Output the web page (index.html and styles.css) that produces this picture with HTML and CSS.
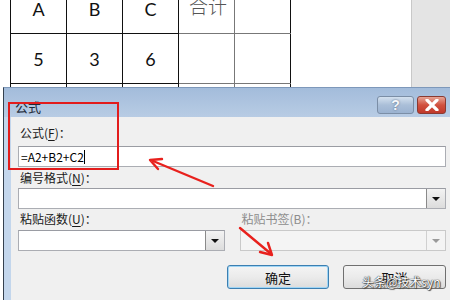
FILE: index.html
```html
<!DOCTYPE html>
<html lang="zh-CN">
<head>
    <meta charset="UTF-8">
    <title>公式</title>
    <link rel="stylesheet" href="styles.css">
</head>
<body>
    <div class="page">
        <div class="sheet">
            <div class="doc">
                <table class="grid">
                    <tr>
                        <td>A</td><td>B</td><td>C</td><td class="han">合计</td><td></td>
                    </tr>
                    <tr>
                        <td>5</td><td>3</td><td>6</td><td></td><td></td>
                    </tr>
                    <tr>
                        <td></td><td></td><td></td><td></td><td></td>
                    </tr>
                </table>
            </div>
            <div class="side"></div>
        </div>

        <div class="dialog">
            <div class="titlebar">
                <span class="title">公式</span>
                <div class="caption-btns">
                    <div class="cap help">?</div>
                    <div class="cap close">
                        <svg width="16" height="12" viewBox="0 0 16 12">
                            <path d="M3 1 L13 11 M13 1 L3 11" stroke="#fff" stroke-width="3.2" stroke-linecap="round"/>
                        </svg>
                    </div>
                </div>
            </div>
            <div class="body">
                <div class="lbl first">公式(<u>F</u>)：</div>
                <div class="field text">=A2+B2+C2<span class="caret"></span></div>

                <div class="lbl second">编号格式(<u>N</u>)：</div>
                <div class="field combo">
                    <span class="drop"><i class="tri"></i></span>
                </div>

                <div class="pair">
                    <div class="col">
                        <div class="lbl">粘贴函数(<u>U</u>)：</div>
                        <div class="field combo">
                            <span class="drop"><i class="tri"></i></span>
                        </div>
                    </div>
                    <div class="col off">
                        <div class="lbl">粘贴书签(B)：</div>
                        <div class="field combo">
                            <span class="drop"><i class="tri"></i></span>
                        </div>
                    </div>
                </div>

                <div class="actions">
                    <button class="btn ok">确定</button>
                    <button class="btn">取消</button>
                </div>
            </div>
        </div>

        <div class="highlight"></div>
        <svg class="arrows" width="450" height="300" viewBox="0 0 450 300">
            <g stroke="#e8211d" stroke-width="2.4" fill="none" stroke-linecap="round">
                <path d="M213 186 L153 161"/>
                <path d="M150 160 L162 159 M150 160 L158 169"/>
                <path d="M240 228 L270 253"/>
                <path d="M272 255 L260 252 M272 255 L268 243"/>
            </g>
        </svg>
        <div class="watermark">头条@技术syn</div>
    </div>
</body>
</html>
```

FILE: styles.css
```css
* {
    box-sizing: border-box;
}

body {
    margin: 0;
    background: #fff;
    font-family: "Noto Sans CJK SC", "Noto Sans", sans-serif;
}

.page {
    position: relative;
    width: 450px;
    height: 300px;
    overflow: hidden;
}

/* document behind the dialog */
.sheet {
    display: flex;
    height: 87px;
    overflow: hidden;
}

.doc {
    width: 412px;
    padding-left: 10px;
    border-right: 1px solid #c8c8c8;
}

.side {
    flex: 1;
    background: #e4e4e4;
}

.grid {
    border-collapse: collapse;
    margin-top: -17px;
}

.grid td {
    width: 56px;
    height: 50px;
    border: 1px solid #111;
    text-align: center;
    font-family: Lato, "Open Sans", sans-serif;
    font-size: 18px;
    color: #111;
    padding: 0;
}

.grid td:nth-child(4), .grid td:nth-child(5) {
    border-color: #777;
    border-left-color: #888;
}

.grid td:last-child {
    border-right-color: #111;
}

.grid td.han {
    font-family: "Noto Sans CJK SC", sans-serif;
    font-weight: 300;
    font-size: 19px;
    color: #555;
    vertical-align: bottom;
    padding-bottom: 14px;
    text-align: left;
    padding-left: 10px;
}

/* dialog */
.dialog {
    margin-left: 3px;
    height: 213px;
    border-left: 1px solid #34404e;
    border-top: 1px solid #7d98ba;
    background: #c3d6ec;
    padding-left: 7px;
}

.titlebar {
    height: 29px;
    margin-left: -7px;
    padding-left: 11px;
    background: linear-gradient(#a3bcdb, #b8cce4);
    display: flex;
    justify-content: space-between;
    align-items: flex-start;
}

.title {
    font-size: 13px;
    line-height: 14px;
    margin-top: 12px;
    color: #1e2a38;
}

.caption-btns {
    display: flex;
    gap: 3px;
    margin-top: 8px;
    margin-right: 4px;
}

.cap {
    height: 18px;
    border: 1px solid #7b8ea6;
    border-radius: 3px;
    display: flex;
    align-items: center;
    justify-content: center;
}

.help {
    width: 37px;
    background: linear-gradient(#d4e1ef, #aabfd8 50%, #9bb3d1);
    color: #f4f7fb;
    font-family: "Liberation Sans", sans-serif;
    font-weight: bold;
    font-size: 14px;
    text-shadow: 0 0 2px #4c5f78;
}

.close {
    width: 29px;
    border-color: #8a3a32;
    background: linear-gradient(#e7a597, #d1513f 50%, #c0392b);
}

.body {
    height: 183px;
    background: #f0f0f0;
    padding: 0 4px 0 7px;
    font-size: 12px;
    color: #1a1a1a;
}

.lbl {
    height: 20px;
    line-height: 20px;
    padding-left: 2px;
}

.lbl u {
    text-underline-offset: 2px;
}

.lbl.first {
    height: 26px;
    line-height: 20px;
    padding-top: 6px;
}

.field {
    height: 21px;
    background: #fff;
    border: 1px solid #abadb3;
    border-top-color: #9a9ca3;
    position: relative;
}

.text {
    margin-top: 3px;
    font-family: "Noto Sans CJK SC", "DejaVu Sans", sans-serif;
    font-size: 12px;
    line-height: 19px;
    padding-left: 2px;
    color: #000;
}

.caret {
    display: inline-block;
    width: 1px;
    height: 14px;
    background: #000;
    vertical-align: -2px;
}

.lbl.second {
    margin-top: 1px;
}

.combo {
    display: flex;
    justify-content: flex-end;
}

.drop {
    width: 19px;
    height: 19px;
    border-left: 1px solid #8a8a8a;
    background: linear-gradient(#f3f3f3, #dcdcdc);
    display: flex;
    align-items: center;
    justify-content: center;
}

.tri {
    width: 0;
    height: 0;
    border-left: 4px solid transparent;
    border-right: 4px solid transparent;
    border-top: 4px solid #111;
}

.pair {
    display: flex;
    gap: 15px;
}

.col {
    flex: 1;
}

.col .field {
    margin-top: 1px;
}

.off .lbl {
    color: #8d8d8d;
}

.off .field {
    background: #f4f4f4;
    border-color: #c9c9c9;
}

.off .drop {
    border-left-color: #d0d0d0;
    background: #f4f4f4;
}

.off .tri {
    border-top-color: #9a9a9a;
}

.actions {
    display: flex;
    justify-content: flex-end;
    gap: 14px;
    margin-top: 14px;
}

.btn {
    width: 103px;
    height: 24px;
    border: 1px solid #707070;
    border-radius: 3px;
    background: linear-gradient(#f4f4f4, #ebebeb 50%, #dcdcdc);
    font-family: "Noto Sans CJK SC", sans-serif;
    font-size: 13px;
    color: #111;
    padding: 0;
}

.btn.ok {
    width: 102px;
    border-color: #3c7fb1;
    box-shadow: inset 0 0 0 1px #9fd5f5;
}

/* overlays drawn on top of the screenshot */
.highlight {
    position: absolute;
    left: 8px;
    top: 102px;
    width: 111px;
    height: 68px;
    border: 2px solid #e21c1c;
}

.arrows {
    position: absolute;
    left: 0;
    top: 0;
}

.watermark {
    position: absolute;
    left: 362px;
    top: 274px;
    white-space: nowrap;
    font-size: 12px;
    line-height: 16px;
    color: #fff;
    text-shadow: 0 0 1px #333, 0 0 1px #333, 1px 1px 1px #444;
}
```
